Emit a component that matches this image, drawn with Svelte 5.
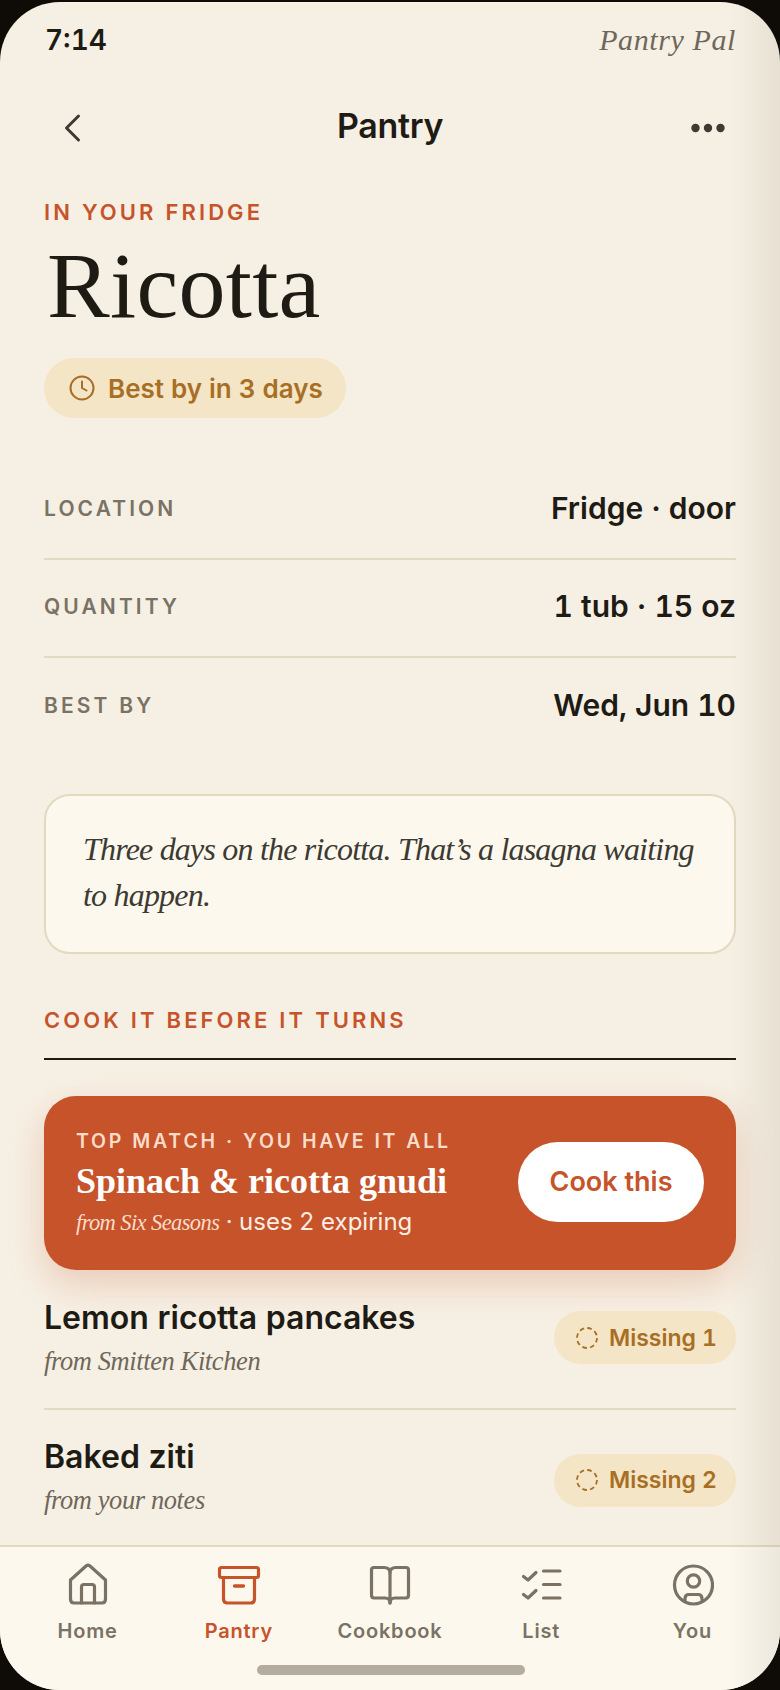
<script>
  const rows = [
    { label: 'LOCATION', value: 'Fridge · door' },
    { label: 'QUANTITY', value: '1 tub · 15 oz' },
    { label: 'BEST BY', value: 'Wed, Jun 10' }
  ];
  const recipes = [
    { name: 'Lemon ricotta pancakes', from: 'from Smitten Kitchen', missing: 'Missing 1' },
    { name: 'Baked ziti', from: 'from your notes', missing: 'Missing 2' }
  ];
  const tabs = ['Home', 'Pantry', 'Cookbook', 'List', 'You'];
</script>

<div class="stage">
  <div class="phone">
    <header class="status">
      <span class="time">7:14</span>
      <span class="brand">Pantry Pal</span>
    </header>

    <nav class="nav">
      <svg width="20" height="30" viewBox="0 0 20 30" fill="none" stroke="#3d3a33" stroke-width="3" stroke-linecap="round" stroke-linejoin="round"><path d="M16.5 3 L4.5 15 L16.5 27"/></svg>
      <h2>Pantry</h2>
      <svg width="36" height="10" viewBox="0 0 36 10" fill="#3d3a33"><circle cx="5.5" cy="5" r="4.2"/><circle cx="18" cy="5" r="4.2"/><circle cx="30.5" cy="5" r="4.2"/></svg>
    </nav>

    <main class="content">
      <p class="eyebrow">IN YOUR FRIDGE</p>
      <h1>Ricotta</h1>
      <div class="chip best">
        <svg width="26" height="26" viewBox="0 0 26 26" fill="none" stroke="#a86f24" stroke-width="2" stroke-linecap="round" stroke-linejoin="round"><circle cx="13" cy="13" r="11.5"/><path d="M13 6.5V13l4.5 2.5"/></svg>
        Best by in 3 days
      </div>

      <dl class="facts">
        {#each rows as r}
          <div class="fact"><dt>{r.label}</dt><dd>{r.value}</dd></div>
        {/each}
      </dl>

      <blockquote>Three days on the ricotta. That’s a lasagna waiting to happen.</blockquote>

      <p class="eyebrow section">COOK IT BEFORE IT TURNS</p>

      <section class="hero">
        <div class="hero-text">
          <p class="hero-kicker">TOP MATCH · YOU HAVE IT ALL</p>
          <h3>Spinach &amp; ricotta gnudi</h3>
          <p class="hero-sub"><em>from Six Seasons</em> · uses 2 expiring</p>
        </div>
        <button>Cook this</button>
      </section>

      {#each recipes as r, i}
        <div class="recipe" class:first={i === 0}>
          <div class="recipe-text">
            <h4>{r.name}</h4>
            <p>{r.from}</p>
          </div>
          <div class="chip miss">
            <svg width="22" height="22" viewBox="0 0 22 22" fill="none" stroke="#a86f24" stroke-width="1.8" stroke-dasharray="4.6 3.25"><circle cx="11" cy="11" r="10"/></svg>
            {r.missing}
          </div>
        </div>
      {/each}
    </main>

    <footer class="tabs">
      {#each tabs as t}
        <div class="tab" class:active={t === 'Pantry'}>
          <svg width="44" height="44" viewBox="0 0 44 44" fill="none" stroke="currentColor" stroke-width="3.2" stroke-linecap="round" stroke-linejoin="round">
            {#if t === 'Home'}
              <path d="M4.5 18 L20 4 Q22 2.5 24 4 L39.5 18 V37 Q39.5 41 36 41 H8 Q4.5 41 4.5 37 Z"/><path d="M15.5 41 V25 Q15.5 22.5 18 22.5 H26 Q28.5 22.5 28.5 25 V41"/>
            {:else if t === 'Pantry'}
              <rect x="2.5" y="5.5" width="39" height="10" rx="2"/><path d="M6.5 15.5 V37 Q6.5 41 10.5 41 H33.5 Q37.5 41 37.5 37 V15.5"/><path d="M17.5 24 H26.5" stroke-width="3.4"/>
            {:else if t === 'Cookbook'}
              <path d="M22 11 Q22 5.5 16 5.5 H6 Q3.5 5.5 3.5 8 V33 Q3.5 36 6 36 H17 Q22 36 22 41 Q22 36 27 36 H38 Q40.5 36 40.5 33 V8 Q40.5 5.5 38 5.5 H28 Q22 5.5 22 11 Z"/><path d="M22 11 V41"/>
            {:else if t === 'List'}
              <path d="M4.5 14.5 L9 18 L17 10.5"/><path d="M4.5 32.5 L9 36 L17 28.5"/><path d="M24.5 9 H41"/><path d="M24.5 22.5 H41"/><path d="M24.5 36 H41"/>
            {:else}
              <circle cx="23.5" cy="23" r="19"/><circle cx="23.5" cy="19" r="6.2"/><path d="M15 38.5 V36.5 Q15 32.5 19 32.5 H28 Q32 32.5 32 36.5 V38.5"/>
            {/if}
          </svg>
          <span>{t}</span>
        </div>
      {/each}
      <div class="indicator"></div>
    </footer>

    <div class="shade"></div>
  </div>
</div>

<style>
  :global(body) { margin: 0; background: #0f0c08; }
  .stage { width: 780px; height: 1690px; overflow: hidden; background: #0f0c08; }
  .phone {
    position: relative;
    margin-top: 2px;
    height: 1688px;
    border-radius: 60px;
    overflow: hidden;
    background: #f6f0e4;
    display: flex;
    flex-direction: column;
    font-family: Inter, sans-serif;
    font-variant-numeric: tabular-nums;
    color: #1e1b14;
  }
  .shade {
    position: absolute; top: 0; right: 0; bottom: 0; width: 50px;
    background: linear-gradient(to right, rgba(120,110,85,0), rgba(120,110,85,.12));
    pointer-events: none;
  }
  .status {
    height: 76px; box-sizing: border-box; padding: 0 44px 0 45px;
    display: flex; justify-content: space-between; align-items: center;
  }
  .time { font-size: 28px; font-weight: 600; }
  .brand { font: italic 400 30px "Liberation Serif", serif; color: #6f675a; letter-spacing: .6px; }
  .nav {
    height: 98px; padding: 0 54px 0 62px; margin-top: 1px;
    display: flex; justify-content: space-between; align-items: center;
    position: relative; box-sizing: border-box;
  }
  .nav h2 { position: absolute; left: 0; right: 0; top: 27px; text-align: center; margin: 0; font-size: 34px; line-height: 40px; font-weight: 600; letter-spacing: -.3px; }
  .content { flex: 1; padding: 0 44px; min-height: 0; }
  .eyebrow { margin: 21px 0 0; font-size: 22px; line-height: 28px; font-weight: 600; letter-spacing: 3.08px; color: #c6532a; }
  h1 { margin: 13px 0 0 3px; font: 400 94px/92px "Liberation Serif", serif; letter-spacing: .3px; color: #1e1b14; }
  .chip { display: inline-flex; align-items: center; border-radius: 40px; background: #f3e5c6; color: #a86f24; font-weight: 600; }
  .best { margin-top: 27px; height: 60px; padding: 0 23px 0 25px; gap: 13px; font-size: 26px; }
  .facts { margin: 44px 0 0; }
  .fact {
    display: flex; justify-content: space-between; align-items: center;
    height: 98px; box-sizing: border-box; border-bottom: 2px solid #e2d9bf; padding-bottom: 4px;
  }
  .fact:last-child { border-bottom: 0; }
  dt { font-size: 21px; font-weight: 600; letter-spacing: 3.1px; color: #7a7264; }
  dd { margin: 0; font-size: 30px; font-weight: 600; }
  blockquote {
    margin: 38px 0 0; height: 160px; box-sizing: border-box; padding: 30px 20px 0 37px;
    background: #fcf8ee; border: 2px solid #e2d9bf; border-radius: 26px;
    font: italic 400 32px/46px "Liberation Serif", serif; letter-spacing: -.8px; color: #3d3a33;
  }
  .section { margin-top: 52px; padding-bottom: 24px; border-bottom: 2px solid #1e1b14; }
  .hero {
    margin-top: 36px; height: 174px; box-sizing: border-box; padding: 0 32px;
    background: #c6532a; border-radius: 32px; color: #fff;
    display: flex; justify-content: space-between; align-items: center;
    box-shadow: 0 14px 36px rgba(198,83,42,.24);
  }
  .hero-kicker { margin: 0; font-size: 19.5px; line-height: 24px; font-weight: 600; letter-spacing: 2.8px; color: #fbdccb; }
  .hero h3 { margin: 6px 0 0; font: 700 36px/44px "Liberation Serif", serif; }
  .hero-sub { margin: 3px 0 0; font-size: 24px; line-height: 32px; color: #fdeee4; }
  .hero-sub em { font: italic 400 22.5px "Liberation Serif", serif; letter-spacing: -.6px; color: #fbdccb; }
  button {
    border: 0; width: 186px; height: 80px; border-radius: 40px; background: #fff; color: #c6532a;
    font: 600 27px Inter, sans-serif; padding: 0 0 2px; margin-bottom: 2px;
  }
  .recipe {
    display: flex; justify-content: space-between; align-items: center;
    height: 138px; box-sizing: border-box; padding-top: 2px;
  }
  .recipe.first { height: 140px; border-bottom: 2px solid #e2d9bf; padding-top: 0; padding-bottom: 3px; }
  .recipe:not(.first) .recipe-text { margin-bottom: 6px; }
  .recipe h4 { margin: 0; font-size: 32px; line-height: 40px; font-weight: 600; }
  .recipe p { margin: 6px 0 0; font: italic 400 26.5px/34px "Liberation Serif", serif; letter-spacing: -.4px; color: #6f675a; }
  .miss { height: 53px; padding: 0 19px 0 22px; gap: 11px; font-size: 23px; }
  .tabs {
    position: relative; height: 145px; box-sizing: border-box;
    background: #fcf8ee; border-top: 2px solid #e2d9bf;
    display: grid; grid-template-columns: repeat(5, 1fr); padding: 15px 12px 0;
    flex: none; margin-top: auto;
  }
  .tab { display: flex; flex-direction: column; align-items: center; color: #7a7264; gap: 13px; font-size: 20px; font-weight: 600; letter-spacing: .8px; }
  .tab.active { color: #c6532a; }
  .indicator { position: absolute; left: 257px; bottom: 15px; width: 268px; height: 10px; border-radius: 5px; background: #b3ac9f; }
</style>
